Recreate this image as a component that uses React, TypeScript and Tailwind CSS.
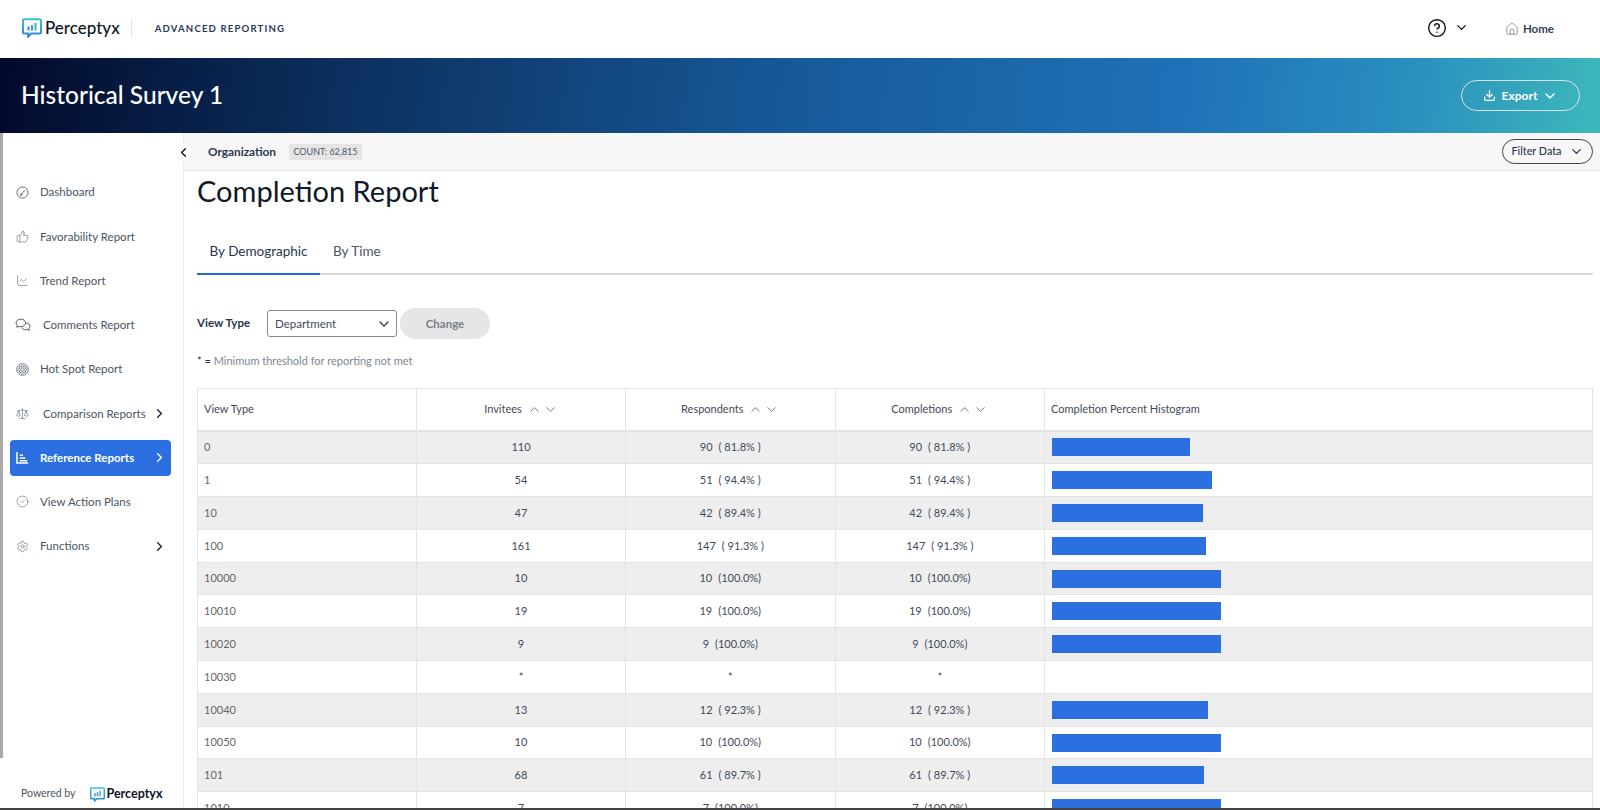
import { ChevronDown, ChevronLeft, ChevronRight, ChevronUp, CircleCheck, CircleHelp, ChartLine, Download, House, Scale, Settings, ThumbsUp } from 'lucide-react'
import type { ReactNode } from 'react'

interface Row {
    name: string
    invitees: string
    count?: string
    pct?: number
}

const rows: Row[] = [
    { name: '0', invitees: '110', count: '90', pct: 81.8 },
    { name: '1', invitees: '54', count: '51', pct: 94.4 },
    { name: '10', invitees: '47', count: '42', pct: 89.4 },
    { name: '100', invitees: '161', count: '147', pct: 91.3 },
    { name: '10000', invitees: '10', count: '10', pct: 100 },
    { name: '10010', invitees: '19', count: '19', pct: 100 },
    { name: '10020', invitees: '9', count: '9', pct: 100 },
    { name: '10030', invitees: '*' },
    { name: '10040', invitees: '13', count: '12', pct: 92.3 },
    { name: '10050', invitees: '10', count: '10', pct: 100 },
    { name: '101', invitees: '68', count: '61', pct: 89.7 },
    { name: '1010', invitees: '7', count: '7', pct: 100 },
]

function Logo({ size }: { size: number }) {
    return (
        <svg width={size} height={size} viewBox="0 0 20 20" fill="none">
            <defs>
                <linearGradient id="logoGrad" x1="0" y1="0" x2="0" y2="1">
                    <stop offset="0" stopColor="#3cc4bd" />
                    <stop offset="1" stopColor="#2a86d8" />
                </linearGradient>
            </defs>
            <path d="M2 1.2h16a1 1 0 0 1 1 1v12.4a1 1 0 0 1-1 1H9.2l-3 3v-3H2a1 1 0 0 1-1-1V2.2a1 1 0 0 1 1-1z" stroke="url(#logoGrad)" strokeWidth="2" />
            <rect x="5.5" y="8.5" width="2" height="4" fill="#2a86d8" />
            <rect x="9" y="7" width="2" height="5.5" fill="#2f9ccf" />
            <rect x="12.5" y="5" width="2" height="7.5" fill="#36b3c6" />
        </svg>
    )
}

function GaugeIcon() {
    return (
        <svg width="13" height="13" viewBox="0 0 14 14" fill="none" stroke="#4b5563" strokeWidth="0.9">
            <circle cx="7" cy="7" r="6" />
            <path d="M5.6 9.4 9.4 4.6" />
            <circle cx="5.6" cy="9.4" r="0.9" />
        </svg>
    )
}

function TargetIcon() {
    return (
        <svg width="13" height="13" viewBox="0 0 14 14" fill="none" stroke="#4b5563" strokeWidth="0.9">
            <circle cx="7" cy="7" r="6.2" />
            <circle cx="7" cy="7" r="4" />
            <circle cx="7" cy="7" r="1.9" />
        </svg>
    )
}

function CommentsIcon() {
    return (
        <svg className="shrink-0" width="16" height="14" viewBox="0 0 15 13" fill="none" stroke="#4b5563" strokeWidth="0.9">
            <path d="M5.5 1C3 1 1 2.5 1 4.5c0 1 .5 1.8 1.2 2.4L1.6 8.6l2-.8c.5.2 1.2.3 1.9.3 2.5 0 4.5-1.6 4.5-3.6S8 1 5.5 1z" />
            <path d="M10.6 4.6c1.9.2 3.4 1.5 3.4 3.1 0 .9-.4 1.6-1 2.1l.5 1.7-1.9-.8c-.5.2-1 .3-1.6.3-1.6 0-3-.8-3.6-2" />
        </svg>
    )
}

function RefIcon() {
    return (
        <svg width="13" height="13" viewBox="0 0 14 14" fill="none" stroke="#fff" strokeWidth="1.6">
            <path d="M1 1v12h12" />
            <path d="M4 4.5h3.5M4 7.5h6M4 10.5h8" />
        </svg>
    )
}

function NavItem({ icon, label, arrow, active, wide }: { icon: ReactNode; label: string; arrow?: boolean; active?: boolean; wide?: boolean }) {
    return (
        <div className={`ml-[10px] mr-[12px] flex h-[36px] items-center rounded-[4px] pl-[6px] pr-[4px] text-[11.5px] ${active ? 'bg-[#2b6fe0] font-bold text-white' : 'text-[#4b5563]'}`}>
            <span className="flex w-[13px] justify-center">{icon}</span>
            <span className={wide ? 'ml-[14px]' : 'ml-[11px]'}>{label}</span>
            {arrow && <ChevronRight className={`ml-auto h-[15px] w-[15px] ${active ? 'text-white' : 'text-[#1f2937]'}`} strokeWidth={2.2} />}
        </div>
    )
}

function SortArrows() {
    return (
        <span className="ml-[5px] flex items-center gap-[1px] text-[#6b7280]">
            <ChevronUp className="h-[15px] w-[15px]" strokeWidth={1.5} />
            <ChevronDown className="h-[15px] w-[15px]" strokeWidth={1.5} />
        </span>
    )
}

function Cell({ children }: { children: ReactNode }) {
    return <div className="flex items-center justify-center border-l border-[#e3e3e3] text-[11px] text-[#3f4a5a]">{children}</div>
}

export default function App() {
    const ico = 'h-[13px] w-[13px] text-[#4b5563]'
    return (
        <div className="flex h-[810px] w-[1600px] flex-col overflow-hidden border-b-2 border-[#444] bg-white font-['Lato','Open_Sans',sans-serif] text-[#1f2937]">
            <header className="flex h-[58px] shrink-0 items-center pl-[22px] pr-[46px]">
                <span className="mb-[3px]"><Logo size={20} /></span>
                <span className="mb-[4px] ml-[3px] text-[17px] font-medium leading-none text-[#0d1526]">Perceptyx</span>
                <span className="mb-[2px] ml-[11px] h-[18px] w-px bg-[#e2e2e2]" />
                <span className="ml-[23px] text-[9.6px] font-bold tracking-[0.12em] text-[#2b3a55]">ADVANCED REPORTING</span>
                <CircleHelp className="mb-[2px] ml-auto h-[20px] w-[20px] text-[#111]" strokeWidth={1.7} />
                <ChevronDown className="mb-[4px] ml-[7px] h-[15px] w-[15px] text-[#111]" strokeWidth={2} />
                <House className="ml-[36px] h-[14px] w-[14px] text-[#6b7280]" strokeWidth={1.2} />
                <span className="ml-[4px] text-[11.5px] font-bold text-[#374151]">Home</span>
            </header>

            <div className="flex h-[75px] shrink-0 items-center justify-between bg-[linear-gradient(97deg,#020a2b_0%,#0c3160_22%,#175a9a_50%,#1f72b8_74%,#2a8fbf_88%,#3db8bb_100%)] pl-[21px] pr-[20px]">
                <h1 className="text-[24.5px] font-medium text-white">Historical Survey 1</h1>
                <button className="flex h-[31px] w-[119px] items-center justify-center rounded-full border border-[#d5e3ea] text-[12px] font-bold text-white">
                    <Download className="h-[13px] w-[13px]" strokeWidth={2.4} />
                    <span className="ml-[6px]">Export</span>
                    <ChevronDown className="ml-[5px] h-[16px] w-[16px]" strokeWidth={2.2} />
                </button>
            </div>

            <div className="flex min-h-0 flex-1">
                <aside className="relative flex w-[184px] shrink-0 flex-col border-r border-[#eeeeee] pt-[41px]">
                    <div className="absolute left-0 top-0 h-[625px] w-[3px] bg-[#a9a9a9]" />
                    <button className="absolute right-[-9px] top-[11px] z-10 flex h-[17px] w-[17px] items-center justify-center rounded-full bg-white">
                        <ChevronLeft className="h-[15px] w-[15px] text-[#111]" strokeWidth={2} />
                    </button>
                    <nav className="flex flex-col gap-[8.25px]">
                        <NavItem icon={<GaugeIcon />} label="Dashboard" />
                        <NavItem icon={<ThumbsUp className={ico} strokeWidth={1} />} label="Favorability Report" />
                        <NavItem icon={<ChartLine className={ico} strokeWidth={1} />} label="Trend Report" />
                        <NavItem icon={<CommentsIcon />} label="Comments Report" wide />
                        <NavItem icon={<TargetIcon />} label="Hot Spot Report" />
                        <NavItem icon={<Scale className={ico} strokeWidth={1} />} label="Comparison Reports" arrow wide />
                        <NavItem icon={<RefIcon />} label="Reference Reports" arrow active />
                        <NavItem icon={<CircleCheck className={ico} strokeWidth={1} />} label="View Action Plans" />
                        <NavItem icon={<Settings className={ico} strokeWidth={1} />} label="Functions" arrow />
                    </nav>
                    <div className="mt-auto flex items-center pb-[6px] pl-[21px]">
                        <span className="text-[10.5px] text-[#4b5563]">Powered by</span>
                        <span className="ml-[14px]"><Logo size={15} /></span>
                        <span className="ml-[2px] text-[12.5px] font-bold leading-none text-[#0d1526]">Perceptyx</span>
                    </div>
                </aside>

                <main className="min-w-0 flex-1">
                    <div className="flex h-[38px] items-center border-b border-[#e5e5e5] bg-[#f7f7f7] pl-[24px] pr-[7px]">
                        <span className="text-[11.8px] font-bold text-[#27364f]">Organization</span>
                        <span className="ml-[13px] flex h-[16px] w-[73px] items-center justify-center rounded-[2px] bg-[#e5e5e5] text-[9px] text-[#4b5563]">COUNT: 62,815</span>
                        <button className="ml-auto flex h-[25px] w-[91px] items-center justify-center rounded-full border border-[#444] text-[10.8px] font-medium text-[#27364f]">
                            Filter Data
                            <ChevronDown className="ml-[7px] h-[15px] w-[15px]" strokeWidth={2} />
                        </button>
                    </div>

                    <div className="pl-[13px] pr-[7px]">
                        <h2 className="mt-[1px] text-[29px] font-normal leading-[38px] text-[#111827]">Completion Report</h2>

                        <div className="mt-[22px] flex h-[43px] items-center border-b-2 border-[#d9d9d9]">
                            <div className="relative flex h-[41px] w-[123px] items-center justify-center pb-[2px] text-[13.5px] text-[#27364f]">
                                By Demographic
                                <span className="absolute bottom-[-2px] left-0 right-0 h-[2px] bg-[#2268d8]" />
                            </div>
                            <span className="mb-[2px] ml-[13px] text-[13.5px] text-[#4b5563]">By Time</span>
                        </div>

                        <div className="mt-[33px] flex items-center">
                            <span className="mb-[2px] w-[70px] text-[11.5px] font-bold text-[#27364f]">View Type</span>
                            <div className="flex h-[27px] w-[130px] items-center justify-between rounded-[3px] border border-[#8a8a8a] pl-[7px] pr-[4px] text-[11.5px] text-[#3f4a5a]">
                                Department
                                <ChevronDown className="h-[16px] w-[16px] text-[#27364f]" strokeWidth={1.8} />
                            </div>
                            <button className="ml-[3px] h-[31px] w-[90px] rounded-full bg-[#e6e6e8] text-[11.5px] font-bold text-[#7b7f86]">Change</button>
                        </div>

                        <p className="mt-[14px] text-[11px] text-[#7c8694]"><span className="text-[#27364f]">* =</span> Minimum threshold for reporting not met</p>

                        <div className="mt-[18px] border-x border-t border-[#e3e3e3]">
                            <div className="grid h-[43px] grid-cols-[218px_209px_209.5px_209.5px_1fr] border-b-2 border-[#e3e3e3] text-[11px] text-[#3f4a5a]">
                                <div className="flex items-center pl-[6px]">View Type</div>
                                <Cell>Invitees<SortArrows /></Cell>
                                <Cell>Respondents<SortArrows /></Cell>
                                <Cell>Completions<SortArrows /></Cell>
                                <div className="flex items-center border-l border-[#e3e3e3] pl-[6px]">Completion Percent Histogram</div>
                            </div>
                            {rows.map((row, i) => (
                                <div key={row.name} className={`grid h-[32.8px] grid-cols-[218px_209px_209.5px_209.5px_1fr] border-b border-[#e3e3e3] ${i % 2 === 0 ? 'bg-[#eeeeee]' : 'bg-white'}`}>
                                    <div className="flex items-center pl-[6px] text-[11px] text-[#666]">{row.name}</div>
                                    <Cell>{row.invitees}</Cell>
                                    <Cell>{row.count ? <>{row.count}<span className="ml-[6px]">({row.pct === 100 ? '100.0%' : ` ${row.pct}% `})</span></> : '*'}</Cell>
                                    <Cell>{row.count ? <>{row.count}<span className="ml-[6px]">({row.pct === 100 ? '100.0%' : ` ${row.pct}% `})</span></> : '*'}</Cell>
                                    <div className="flex items-center border-l border-[#e3e3e3] pl-[7px]">
                                        {row.pct && <div className="h-[18px] bg-[#2b6fe0]" style={{ width: `${row.pct * 1.69}px` }} />}
                                    </div>
                                </div>
                            ))}
                        </div>
                    </div>
                </main>
            </div>
        </div>
    )
}
